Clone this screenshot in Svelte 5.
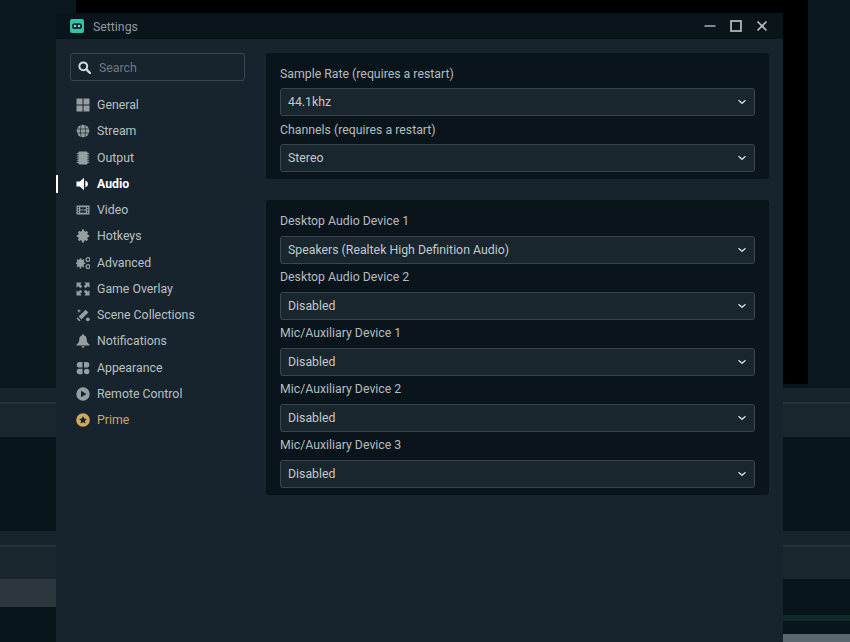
<script lang="ts">
	const navItems = [
		{ name: 'General', icon: 'general' },
		{ name: 'Stream', icon: 'stream' },
		{ name: 'Output', icon: 'output' },
		{ name: 'Audio', icon: 'audio', active: true },
		{ name: 'Video', icon: 'video' },
		{ name: 'Hotkeys', icon: 'hotkeys' },
		{ name: 'Advanced', icon: 'advanced' },
		{ name: 'Game Overlay', icon: 'overlay' },
		{ name: 'Scene Collections', icon: 'scenes' },
		{ name: 'Notifications', icon: 'bell' },
		{ name: 'Appearance', icon: 'appearance' },
		{ name: 'Remote Control', icon: 'remote' },
		{ name: 'Prime', icon: 'prime', prime: true }
	];

	const rateFields = [
		{ label: 'Sample Rate (requires a restart)', value: '44.1khz' },
		{ label: 'Channels (requires a restart)', value: 'Stereo' }
	];

	const deviceFields = [
		{ label: 'Desktop Audio Device 1', value: 'Speakers (Realtek High Definition Audio)' },
		{ label: 'Desktop Audio Device 2', value: 'Disabled' },
		{ label: 'Mic/Auxiliary Device 1', value: 'Disabled' },
		{ label: 'Mic/Auxiliary Device 2', value: 'Disabled' },
		{ label: 'Mic/Auxiliary Device 3', value: 'Disabled' }
	];
</script>

{#snippet field(f: { label: string; value: string })}
	<div class="field">
		<div class="label">{f.label}</div>
		<div class="select">
			<span>{f.value}</span>
			<svg width="10" height="6" viewBox="0 0 10 6"><path d="M1.500 1.200l3.500 3 3.500-3" fill="none" stroke="#d0d5d8" stroke-width="1.500" /></svg>
		</div>
	</div>
{/snippet}

<div class="desktop">
	<div class="backdrop">
		<div class="top-band">
			<div class="top-side"></div>
			<div class="top-black"></div>
			<div class="top-side"></div>
		</div>
		<div class="dock first"><div class="dock-head"></div><div class="dock-body"></div></div>
		<div class="well"></div>
		<div class="dock second"><div class="dock-head"></div><div class="dock-body"></div></div>
		<div class="bottom">
			<div class="bottom-left"><div class="selected-row"></div></div>
			<div class="bottom-right"><div class="meter"></div><div class="scroll"></div></div>
		</div>
	</div>

	<div class="window">
		<header class="titlebar">
			<div class="logo">
				<svg width="14" height="14" viewBox="0 0 14 14">
					<rect width="14" height="14" rx="2" fill="#31c3a2" />
					<rect x="2" y="4.200" width="10" height="5.800" rx="2.600" fill="#14343a" />
					<circle cx="5" cy="7" r="1" fill="#e6f5f1" />
					<circle cx="9" cy="7" r="1" fill="#e6f5f1" />
				</svg>
			</div>
			<span class="title">Settings</span>
			<div class="controls">
				<svg width="12" height="12" viewBox="0 0 12 12"><path d="M0.500 6h11" stroke="#b9bec1" stroke-width="1.400" /></svg>
				<svg width="12" height="12" viewBox="0 0 12 12"><rect x="1" y="1" width="10" height="10" fill="none" stroke="#b9bec1" stroke-width="1.700" /></svg>
				<svg width="12" height="12" viewBox="0 0 12 12"><path d="M1.500 1.500l9 9M10.500 1.500l-9 9" stroke="#b9bec1" stroke-width="1.700" /></svg>
			</div>
		</header>

		<div class="body">
			<aside class="sidebar">
				<div class="search">
					<svg width="13" height="13" viewBox="0 0 13 13">
						<circle cx="5.300" cy="5.300" r="3.900" fill="none" stroke="#d4d8da" stroke-width="2" />
						<path d="M8.300 8.300l3.700 3.700" stroke="#d4d8da" stroke-width="2.400" stroke-linecap="round" />
					</svg>
					<span>Search</span>
				</div>
				<nav class="nav">
					{#each navItems as item (item.name)}
						<div class="nav-item" class:active={item.active} class:prime={item.prime}>
							<svg class="icon" width="14" height="14" viewBox="0 0 14 14">
								{#if item.icon === 'general'}
									<path d="M0.500 0.500h6v6h-6zM7.500 0.500h6v6h-6zM0.500 7.500h6v6h-6zM7.500 7.500h6v6h-6z" fill="currentColor" />
								{:else if item.icon === 'stream'}
									<circle cx="7" cy="7" r="6.300" fill="currentColor" />
									<path d="M0.700 5h12.600M0.700 9h12.600M5.200 1c-.9 3.700-.9 8.300 0 12M8.800 1c.9 3.700.9 8.300 0 12" fill="none" stroke="#18242d" stroke-width="0.700" />
								{:else if item.icon === 'output'}
									<rect x="2.500" y="0.500" width="9" height="13" rx="1" fill="currentColor" />
									<path d="M0.800 2.500h12.400M0.800 4.700h12.400M0.800 7h12.400M0.800 9.300h12.400M0.800 11.500h12.400" stroke="currentColor" stroke-width="1.100" />
								{:else if item.icon === 'audio'}
									<path d="M0.500 4.500h3.300L8 0.800v12.400L3.800 9.500H0.500z" fill="currentColor" />
									<path d="M9.300 3.600a3.500 3.500 0 0 1 0 6.800z" fill="currentColor" />
								{:else if item.icon === 'video'}
									<path fill-rule="evenodd" d="M0.500 2.500h13v9h-13zM3 4v1.300h-1.200v-1.300zM3 6.300v1.400h-1.200v-1.400zM3 8.700v1.300h-1.200v-1.300zM12.200 4v1.300h-1.200v-1.300zM12.200 6.300v1.400h-1.200v-1.400zM12.200 8.700v1.300h-1.200v-1.300zM4.200 4.200v2.300h5.600v-2.300zM4.200 7.500v2.300h5.600v-2.300z" fill="currentColor" />
								{:else if item.icon === 'hotkeys'}
									<circle cx="7" cy="7" r="3.400" fill="none" stroke="currentColor" stroke-width="3.200" />
									<path d="M7 0.500v13M0.800 7h12.400M2.600 2.600l8.800 8.800M11.400 2.600l-8.800 8.800" stroke="currentColor" stroke-width="2.200" />
								{:else if item.icon === 'advanced'}
									<g transform="translate(-0.800 0.300) scale(0.75)">
										<circle cx="7" cy="9.300" r="3.200" fill="none" stroke="currentColor" stroke-width="3.400" />
										<path d="M7 2.500v13.600M0.500 9.300h13M2.500 4.500l9 9.600M11.500 4.500l-9 9.600" stroke="currentColor" stroke-width="2.200" />
									</g>
									<circle cx="12" cy="3.500" r="1.900" fill="none" stroke="currentColor" stroke-width="1.300" />
									<circle cx="12" cy="10.500" r="1.900" fill="none" stroke="currentColor" stroke-width="1.300" />
								{:else if item.icon === 'overlay'}
									<path d="M0.500 0.500h5.200L4.200 2.300l2 2-1.900 1.900-2-2L0.500 5.700zM13.500 0.500H8.300l1.500 1.800-2 2 1.900 1.900 2-2 1.800 1.500zM0.500 13.500h5.200L4.200 11.700l2-2-1.900-1.900-2 2L0.500 8.300zM13.500 13.500H8.300l1.500-1.800-2-2 1.900-1.900 2 2 1.800-1.500z" fill="currentColor" />
								{:else if item.icon === 'scenes'}
									<path d="M2.600 8.600l7-6.800 2.800 2.800-7 7z" fill="currentColor" />
									<path d="M1.700 9.500l2.800 2.800-1.100 1.100-2.800-2.800z" fill="currentColor" />
									<path d="M3 0.800l.6 1.500 1.500.6-1.500.6-.6 1.500-.6-1.500-1.500-.6 1.500-.6z" fill="currentColor" />
									<circle cx="11.800" cy="11.300" r="1.900" fill="currentColor" />
								{:else if item.icon === 'bell'}
									<path d="M7 0.300c.7 0 1 .5 1 1.100 2 .5 2.800 2.300 2.800 4.300 0 2 .7 3.400 2.700 4.800v1H0.500v-1c2-1.400 2.700-2.800 2.700-4.800 0-2 .8-3.800 2.800-4.300 0-.6.300-1.100 1-1.100zM5.500 12.300h3c0 .9-.7 1.500-1.500 1.500s-1.500-.6-1.500-1.500z" fill="currentColor" />
								{:else if item.icon === 'appearance'}
									<path d="M3.500 1h3v5.600h-3a2.800 2.800 0 0 1 0-5.600zM8 1h2.500a2.800 2.800 0 0 1 0 5.600H8zM6.500 7.800v5.400H3.600A2.700 2.700 0 0 1 0.700 10.500 2.700 2.700 0 0 1 3.600 7.800zM10.700 7.800a2.700 2.700 0 1 1 0 5.400 2.700 2.700 0 0 1 0-5.400z" fill="currentColor" />
								{:else if item.icon === 'remote'}
									<path fill-rule="evenodd" d="M7 0.300a6.700 6.700 0 1 1 0 13.400A6.700 6.700 0 0 1 7 0.300zM5 3.700v6.600l5.500-3.300z" fill="currentColor" />
								{:else if item.icon === 'prime'}
									<path fill-rule="evenodd" d="M7 0.200a6.800 6.800 0 1 1 0 13.600A6.800 6.800 0 0 1 7 0.200zM7 3l1.200 2.600 2.800.3-2.100 1.900.6 2.800L7 9.200l-2.500 1.400.6-2.800L3 5.900l2.800-.3z" fill="currentColor" />
								{/if}
							</svg>
							<span>{item.name}</span>
						</div>
					{/each}
				</nav>
			</aside>

			<main class="content">
				<section class="card rates">
					{#each rateFields as f (f.label)}
						{@render field(f)}
					{/each}
				</section>
				<section class="card devices">
					{#each deviceFields as f (f.label)}
						{@render field(f)}
					{/each}
				</section>
			</main>
		</div>
	</div>
</div>

<style>
	:global(body) {
		margin: 0;
		background: #08151b;
		font-family: Roboto, 'Liberation Sans', sans-serif;
	}

	.desktop {
		position: relative;
		width: 850px;
		height: 642px;
		overflow: hidden;
	}

	.backdrop {
		display: flex;
		flex-direction: column;
		height: 100%;
	}

	.top-band {
		display: flex;
		height: 388px;
	}

	.top-side {
		width: 42px;
		flex: none;
		background: #0a171d;
	}

	.top-side:first-child {
		width: 76px;
	}

	.top-black {
		flex: 1;
		height: 384px;
		background: #000;
	}

	.dock {
		background: #1a262d;
	}

	.dock-head {
		height: 14px;
		background: #17242b;
		border-bottom: 2px solid #253138;
	}

	.dock.first .dock-body {
		height: 33px;
	}

	.dock.second .dock-body {
		height: 32px;
	}

	.well {
		height: 94px;
		background: #08151b;
	}

	.bottom {
		flex: 1;
		display: flex;
		justify-content: space-between;
	}

	.bottom-left {
		width: 56px;
	}

	.selected-row {
		height: 28px;
		background: #2c373d;
	}

	.bottom-right {
		width: 67px;
		display: flex;
		flex-direction: column;
		justify-content: flex-end;
	}

	.meter {
		height: 6px;
		margin-bottom: 13px;
		background: #0f2a27;
	}

	.scroll {
		height: 8px;
		background: #5a676e;
	}

	.window {
		position: absolute;
		left: 56px;
		top: 13px;
		width: 727px;
		height: 629px;
		display: flex;
		flex-direction: column;
		background: #17242d;
		color: #c9cfd2;
	}

	.titlebar {
		flex: none;
		height: 26px;
		display: flex;
		align-items: center;
		padding: 0 14px;
		background: #09151b;
	}

	.logo {
		display: flex;
		margin-right: 9px;
	}

	.title {
		padding-top: 1px;
		font-size: 12.300px;
		color: #8f999e;
	}

	.controls {
		margin-left: auto;
		display: flex;
		gap: 14px;
		padding-right: 1px;
	}

	.body {
		flex: 1;
		display: flex;
		min-height: 0;
	}

	.sidebar {
		width: 210px;
		flex: none;
		padding: 14px 0 0;
	}

	.search {
		box-sizing: border-box;
		width: 175px;
		height: 28px;
		margin-left: 14px;
		display: flex;
		align-items: center;
		gap: 8px;
		padding-left: 7px;
		border: 1px solid #3b474e;
		border-radius: 3px;
		font-size: 12.300px;
		color: #6f7a80;
	}

	.search span {
		padding-top: 1px;
	}

	.nav {
		margin-top: 11px;
	}

	.nav-item {
		position: relative;
		height: 26.250px;
		display: flex;
		align-items: center;
		gap: 7px;
		padding-left: 20px;
		font-size: 12.300px;
		color: #b9c0c4;
	}

	.icon {
		flex: none;
		color: #969ea2;
	}

	.nav-item.active {
		color: #fff;
		font-weight: 700;
	}

	.nav-item.active .icon {
		color: #fff;
	}

	.nav-item.active::before {
		content: '';
		position: absolute;
		left: 0;
		top: 4px;
		bottom: 4px;
		width: 1.500px;
		background: #fff;
	}

	.nav-item.prime {
		color: #c9a768;
	}

	.nav-item.prime .icon {
		color: #d4a95e;
	}

	.content {
		flex: 1;
		min-width: 0;
		padding: 14px 14px 0 0;
		display: flex;
		flex-direction: column;
		gap: 21px;
	}

	.card {
		padding: 7px 14px 7px;
		border-radius: 3px;
		background: #09151b;
	}

	.card.devices {
		padding-top: 8px;
	}

	.field {
		display: flex;
		flex-direction: column;
	}

	.label {
		height: 28px;
		line-height: 27px;
		font-size: 12.300px;
		color: #b6bdc1;
	}

	.rates .label {
		line-height: 29px;
	}

	.select {
		box-sizing: border-box;
		height: 28px;
		display: flex;
		align-items: center;
		justify-content: space-between;
		padding: 0 7px 1px;
		border: 1px solid #3a464d;
		border-radius: 3px;
		background: #1a262e;
		font-size: 12.300px;
		color: #c3c9cc;
	}

	.rates .select {
		padding-bottom: 0;
	}
</style>
